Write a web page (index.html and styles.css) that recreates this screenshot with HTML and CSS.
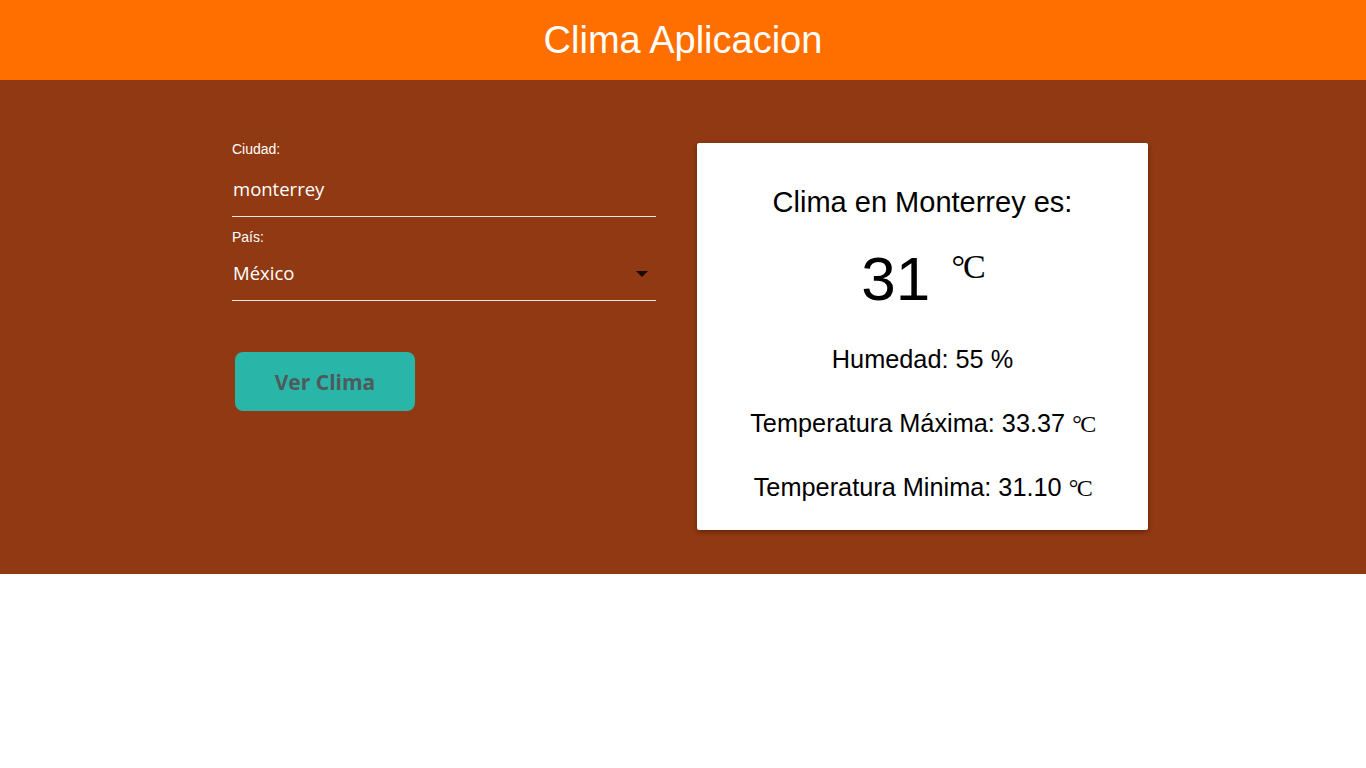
FILE: index.html
```html
<!DOCTYPE html>
<html lang="es">
<head>
<meta charset="utf-8">
<title>Clima Aplicacion</title>
<link rel="stylesheet" href="styles.css">
</head>
<body>
<header class="topbar">
  <h1 class="title">Clima Aplicacion</h1>
</header>
<main class="main">
  <div class="content">
    <form class="form">
      <div class="field">
        <label class="label">Ciudad:</label>
        <div class="input">monterrey</div>
      </div>
      <div class="field">
        <label class="label">País:</label>
        <div class="input select"><span>México</span><span class="caret"></span></div>
      </div>
      <button type="button" class="btn">Ver Clima</button>
    </form>
    <section class="card">
      <h2 class="card-title">Clima en Monterrey es:</h2>
      <p class="temp">31 <span class="deg">°C</span></p>
      <p class="line">Humedad: 55 %</p>
      <p class="line">Temperatura Máxima: 33.37 <span class="unit">°C</span></p>
      <p class="line">Temperatura Minima: 31.10 <span class="unit">°C</span></p>
    </section>
  </div>
</main>
</body>
</html>
```

FILE: styles.css
```css
* { box-sizing: border-box; }
html, body { margin: 0; padding: 0; }
body {
  font-family: Arial, "Liberation Sans", sans-serif;
  background: #ffffff;
}
.topbar {
  height: 80px;
  background: #ff6f00;
  display: flex;
  align-items: center;
  justify-content: center;
}
.title {
  margin: 0;
  color: #ffffff;
  font-weight: normal;
  font-size: 38px;
  font-family: "Liberation Sans", Arial, sans-serif;
}
.main {
  background: #913912;
  height: 494px;
  padding-top: 63px;
}
.content {
  display: flex;
  margin-left: 232px;
  gap: 41px;
  align-items: flex-start;
}
.form {
  width: 424px;
}
.field { display: flex; flex-direction: column; }
.label {
  color: #ffffff;
  font-family: "Liberation Sans", Arial, sans-serif;
  font-size: 14px;
  line-height: 16px;
  margin-top: -2px;
}
.input {
  color: #ffffff;
  font-family: "Open Sans", "Noto Sans", sans-serif;
  font-size: 18.5px;
  height: 60px;
  display: flex;
  align-items: center;
  border-bottom: 1px solid #f3e6e0;
  padding-top: 4px;
  padding-left: 1px;
}
.field + .field { margin-top: 14px; }
.field + .field .input { height: 56px; padding-top: 0; }
.select { justify-content: space-between; padding-right: 8px; }
.caret {
  width: 0; height: 0;
  border-left: 6px solid transparent;
  border-right: 6px solid transparent;
  border-top: 6px solid #1a0a05;
  margin-top: 2px;
}
.btn {
  margin-top: 51px;
  margin-left: 3px;
  width: 180px;
  height: 59px;
  border: none;
  border-radius: 8px;
  background: #29b6a8;
  color: #4e5a5c;
  font-family: "Open Sans", "Noto Sans", sans-serif;
  font-weight: bold;
  font-size: 21px;
}
.card {
  width: 451px;
  height: 387px;
  background: #ffffff;
  border-radius: 2px;
  box-shadow: 0 2px 4px rgba(0,0,0,0.25), 0 1px 6px rgba(0,0,0,0.12);
  text-align: center;
  color: #000000;
  padding-top: 43px;
}
.card-title {
  margin: 0;
  font-weight: normal;
  font-size: 29px;
  line-height: 32px;
}
.temp {
  margin: 26px 0 0;
  font-size: 62px;
  line-height: 70px;
}
.deg {
  font-family: "Liberation Serif", "Times New Roman", serif;
  font-size: 34px;
  line-height: 0;
  letter-spacing: -2px;
  margin-left: 4px;
  vertical-align: 22px;
}
.line {
  margin: 0;
  font-size: 25.3px;
  line-height: 28px;
}
.temp + .line { margin-top: 31px; }
.line + .line { margin-top: 36px; }
.unit {
  font-family: "Liberation Serif", "Times New Roman", serif;
  font-size: 24px;
  line-height: 0;
  letter-spacing: -1.5px;
}
```
